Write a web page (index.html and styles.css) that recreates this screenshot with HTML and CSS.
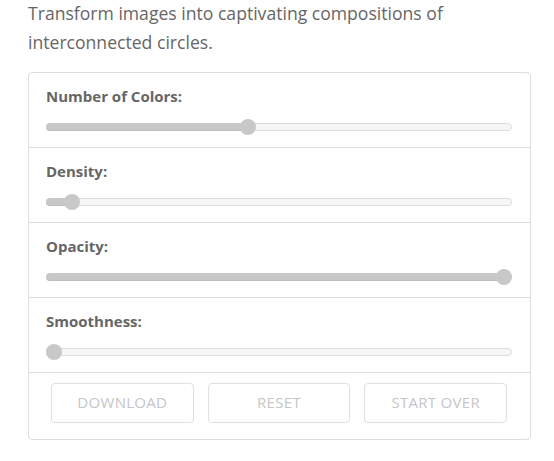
FILE: index.html
```html
<!DOCTYPE html>
<html>
<head>
<meta charset="utf-8">
<link rel="stylesheet" href="styles.css">
</head>
<body>
<div class="page">
  <p class="intro">Transform images into captivating compositions of interconnected circles.</p>
  <div class="card">
    <div class="row">
      <div class="label">Number of Colors:</div>
      <div class="slider"><div class="track"></div><div class="fill" style="width: calc(8px + (100% - 16px) * 0.43)"></div><div class="thumb" style="left: calc((100% - 16px) * 0.43)"></div></div>
    </div>
    <div class="row">
      <div class="label">Density:</div>
      <div class="slider"><div class="track"></div><div class="fill" style="width: calc(8px + (100% - 16px) * 0.04)"></div><div class="thumb" style="left: calc((100% - 16px) * 0.04)"></div></div>
    </div>
    <div class="row">
      <div class="label">Opacity:</div>
      <div class="slider"><div class="track"></div><div class="fill" style="width: calc(8px + (100% - 16px) * 1)"></div><div class="thumb" style="left: calc((100% - 16px) * 1)"></div></div>
    </div>
    <div class="row">
      <div class="label">Smoothness:</div>
      <div class="slider"><div class="track"></div><div class="fill" style="width: calc(8px + (100% - 16px) * 0)"></div><div class="thumb" style="left: calc((100% - 16px) * 0)"></div></div>
    </div>
    <div class="actions">
      <button class="btn">DOWNLOAD</button>
      <button class="btn">RESET</button>
      <button class="btn">START OVER</button>
    </div>
  </div>
</div>
</body>
</html>
```
FILE: styles.css
```css
* { box-sizing: border-box; }
html, body { margin: 0; padding: 0; background: #fff; }
body { font-family: "Open Sans", "Liberation Sans", sans-serif; color: #666; }
.page { padding: 0 23px 0 28px; }
.intro {
  margin: -1px 0 15px;
  font-size: 17.6px;
  line-height: 29px;
  color: #666;
}
.card {
  border: 1px solid #dedede;
  border-radius: 4px;
}
.row {
  padding: 13px 18px 12px 17px;
  border-bottom: 1px solid #dedede;
}
.label {
  font-size: 15px;
  font-weight: 700;
  line-height: 20px;
  color: #666;
}
.slider {
  position: relative;
  height: 16px;
  margin-top: 13px;
}
.track {
  position: absolute;
  left: 0; right: 0; top: 4px;
  height: 8px;
  border-radius: 4px;
  background: #f6f6f6;
  border: 1px solid #dcdcdc;
}
.fill {
  position: absolute;
  left: 0; top: 4px;
  height: 8px;
  border-radius: 4px;
  background: #c8c8c8;
  border-bottom: 1px solid #bdbdbd;
}
.thumb {
  position: absolute;
  top: 0;
  width: 16px; height: 16px;
  border-radius: 50%;
  background: #c8c8c8;
}
.actions {
  display: flex;
  gap: 14px;
  padding: 10px 23px 16px 22px;
}
.btn {
  flex: 1;
  height: 40px;
  padding: 0 0 2px;
  border: 1px solid #e0e0e0;
  border-radius: 4px;
  background: #fff;
  font-family: "Open Sans", "Liberation Sans", sans-serif;
  font-size: 15px;
  color: #c6c6c8;
  letter-spacing: 0.3px;
}
```
